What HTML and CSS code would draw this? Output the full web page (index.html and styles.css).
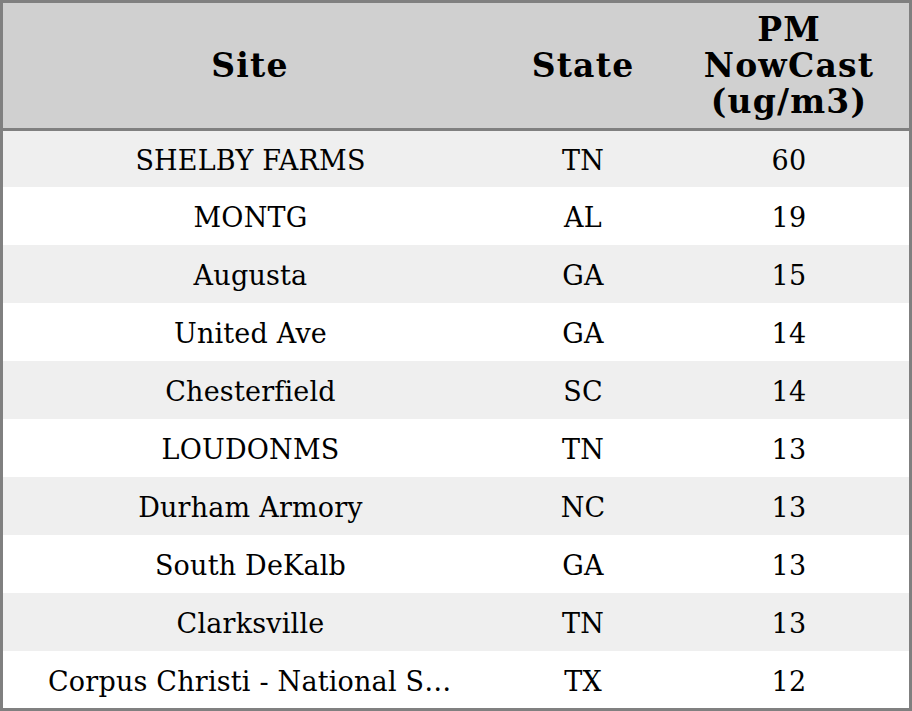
FILE: index.html
```html
<!DOCTYPE html>
<html>
<head>
<meta charset="utf-8">
<link rel="stylesheet" href="styles.css">
</head>
<body>
<div class="frame">
<table class="grid">
<colgroup><col class="c-site"><col class="c-state"><col class="c-pm"></colgroup>
<thead>
<tr><th>Site</th><th>State</th><th>PM<br>NowCast<br>(ug/m3)</th></tr>
</thead>
<tbody>
<tr><td class="site">SHELBY FARMS</td><td>TN</td><td>60</td></tr>
<tr><td class="site">MONTG</td><td>AL</td><td>19</td></tr>
<tr><td class="site">Augusta</td><td>GA</td><td>15</td></tr>
<tr><td class="site">United Ave</td><td>GA</td><td>14</td></tr>
<tr><td class="site">Chesterfield</td><td>SC</td><td>14</td></tr>
<tr><td class="site">LOUDONMS</td><td>TN</td><td>13</td></tr>
<tr><td class="site">Durham Armory</td><td>NC</td><td>13</td></tr>
<tr><td class="site">South DeKalb</td><td>GA</td><td>13</td></tr>
<tr><td class="site">Clarksville</td><td>TN</td><td>13</td></tr>
<tr><td class="site">Corpus Christi - National Seashore</td><td>TX</td><td>12</td></tr>
</tbody>
</table>
</div>
</body>
</html>
```
FILE: styles.css
```css
html, body {
  margin: 0;
  padding: 0;
  background: #ffffff;
}
.frame {
  width: 906px;
  height: 705px;
  border: 3px solid #808080;
  overflow: hidden;
  font-family: "DejaVu Serif", serif;
  color: #000;
}
.grid {
  width: 906px;
  border-collapse: collapse;
  table-layout: fixed;
}
.c-site { width: 494px; }
.c-state { width: 172px; }
.c-pm { width: 240px; }
.grid th {
  height: 125px;
  padding: 0;
  background: #d0d0d0;
  border-bottom: 3px solid #808080;
  font-size: 33px;
  line-height: 36px;
  letter-spacing: 1.2px;
  font-weight: bold;
  text-align: center;
  vertical-align: middle;
}
.grid td {
  height: 56px;
  padding: 2px 0 0;
  font-size: 27px;
  letter-spacing: 0.2px;
  text-align: center;
  vertical-align: middle;
  white-space: nowrap;
  overflow: hidden;
  text-overflow: ellipsis;
}
.grid td.site {
  padding: 2px 44px 0 45px;
}
.grid tbody tr:first-child td { height: 54px; }
.grid tbody tr:nth-child(odd) td { background: #efefef; }
.grid tbody tr:nth-child(even) td { background: #ffffff; }
```
